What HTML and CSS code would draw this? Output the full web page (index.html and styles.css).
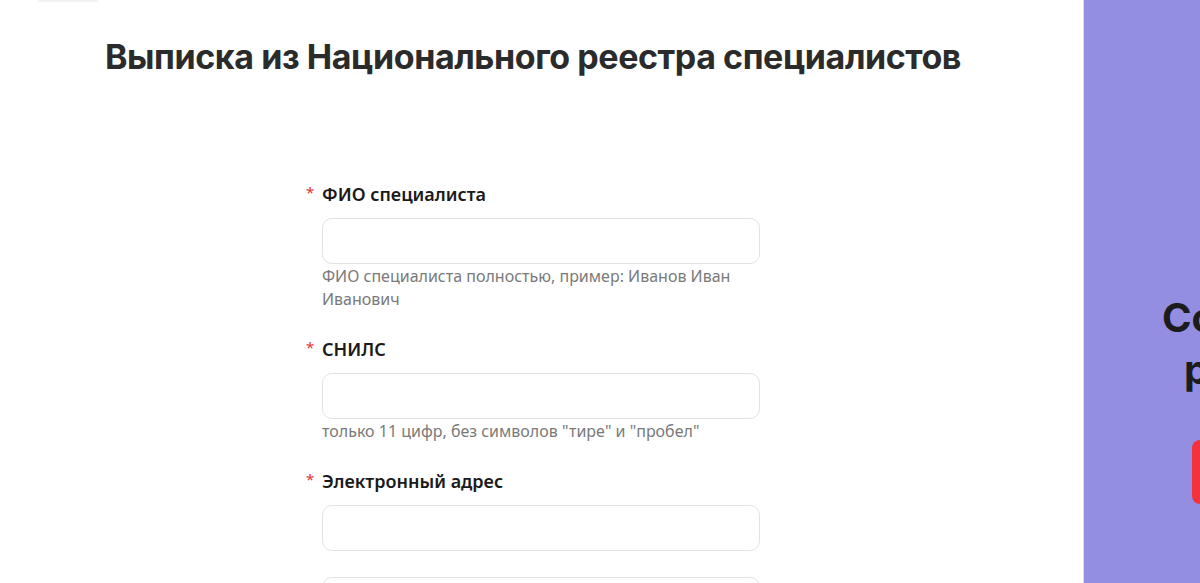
FILE: index.html
```html
<!DOCTYPE html>
<html lang="ru">
<head>
<meta charset="utf-8">
<title>Выписка из Национального реестра специалистов</title>
<link rel="stylesheet" href="styles.css">
</head>
<body>
<div class="page">
  <main class="main">
    <div class="topline"></div>
    <h1 class="title">Выписка из Национального реестра специалистов</h1>
    <form class="form">
      <div class="field">
        <label class="label"><span class="req">*</span>ФИО специалиста</label>
        <div class="input"></div>
        <div class="hint">ФИО специалиста полностью, пример: Иванов Иван Иванович</div>
      </div>
      <div class="field">
        <label class="label"><span class="req">*</span>СНИЛС</label>
        <div class="input"></div>
        <div class="hint">только 11 цифр, без символов "тире" и "пробел"</div>
      </div>
      <div class="field">
        <label class="label"><span class="req">*</span>Электронный адрес</label>
        <div class="input"></div>
      </div>
      <div class="field field-next">
        <div class="input"></div>
      </div>
    </form>
  </main>
  <aside class="side">
    <div class="side-inner">
      <div class="side-line1">Создайте</div>
      <div class="side-line2">резюме</div>
      <div class="side-btn">Создать</div>
    </div>
  </aside>
</div>
</body>
</html>
```

FILE: styles.css
```css
html, body {
  margin: 0;
  padding: 0;
  height: 100%;
  overflow: hidden;
  background: #ffffff;
}

body {
  font-family: "Noto Sans", "Open Sans", sans-serif;
  color: #1f1f1f;
}

.page {
  display: flex;
  height: 583px;
  overflow: hidden;
}

.main {
  flex: 1;
  min-width: 0;
}

.topline {
  width: 60px;
  height: 2px;
  margin-left: 38px;
  background: #f2f2f2;
}

.title {
  margin: 35px 0 0 105px;
  font-family: Inter, "Noto Sans", sans-serif;
  font-weight: 700;
  font-size: 34px;
  line-height: 40px;
  letter-spacing: -0.42px;
  color: #2b2b2b;
}

.form {
  margin: 105px 0 0 322px;
  width: 438px;
  display: flex;
  flex-direction: column;
  gap: 26px;
}

.field {
  display: flex;
  flex-direction: column;
}

.label {
  position: relative;
  font-size: 18px;
  font-weight: 600;
  line-height: 24px;
  color: #1a1a1a;
  margin-bottom: 12px;
}

.req {
  position: absolute;
  left: -16px;
  top: -2px;
  color: #e0333c;
  font-size: 15px;
  font-weight: 400;
}

.input {
  height: 44px;
  border: 1px solid #e2e2e2;
  border-radius: 10px;
  background: #fff;
}

.hint {
  font-size: 16px;
  line-height: 23px;
  color: #7a7a7a;
  margin-top: 1px;
}

.field-next {
  margin-top: 0;
}

.side {
  width: 116px;
  flex: none;
  background: #938ee2;
  border-left: 1px solid #dcdcdc;
  overflow: hidden;
}

.side-inner {
  width: 300px;
  padding-top: 292px;
  font-family: Inter, "Noto Sans", sans-serif;
  font-weight: 700;
  font-size: 40px;
  line-height: 52px;
  color: #1c1c1c;
}

.side-line1 {
  margin-left: 78px;
}

.side-line2 {
  margin-left: 100px;
}

.side-btn {
  margin: 44px 0 0 108px;
  width: 200px;
  height: 64px;
  border-radius: 8px;
  background: #f2333d;
  color: #fff;
  font-size: 18px;
  line-height: 64px;
  text-align: center;
}
```
